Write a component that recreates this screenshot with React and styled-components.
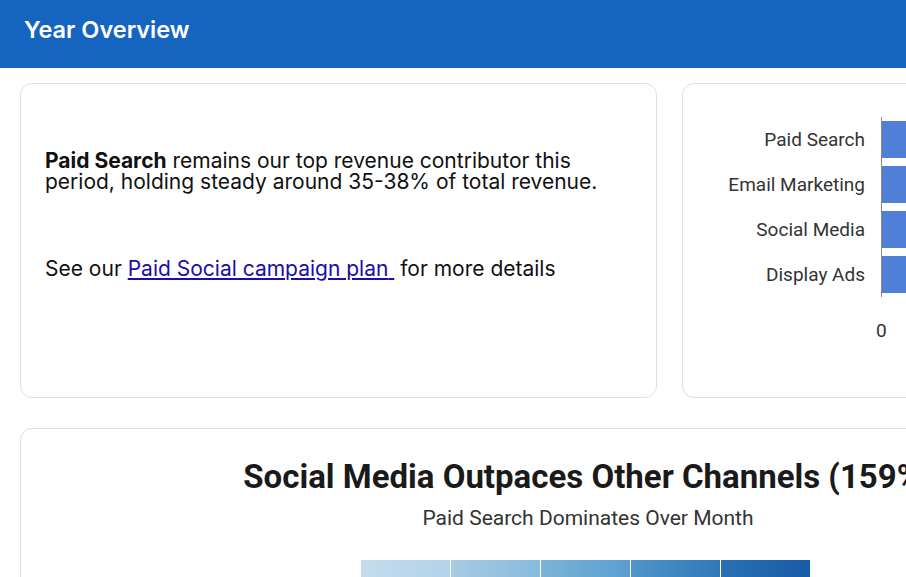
import React from 'react';
import styled, { createGlobalStyle } from 'styled-components';

const GlobalStyle = createGlobalStyle`
  html, body {
    margin: 0;
    padding: 0;
    background: #ffffff;
    overflow: hidden;
  }
  * {
    box-sizing: border-box;
  }
`;

const Page = styled.div`
  width: 1176px;
  font-family: Inter, 'Liberation Sans', sans-serif;
`;

const Header = styled.header`
  height: 68px;
  background-color: #1565c0;
  padding: 15px 24px 0;
`;

const HeaderTitle = styled.h1`
  margin: 0;
  font-size: 23.5px;
  line-height: 30px;
  font-weight: 600;
  color: #ffffff;
`;

const Main = styled.main`
  padding: 15px 20px 0;
  display: flex;
  flex-direction: column;
  gap: 30px;
`;

const TopRow = styled.div`
  display: grid;
  grid-template-columns: 637px 474px;
  gap: 25px;
  height: 315px;
`;

const Card = styled.section`
  background: #ffffff;
  border: 1px solid #e0e0e0;
  border-radius: 12px;
`;

const TextCard = styled(Card)`
  padding: 66px 24px 24px;
  color: #111111;
  font-size: 21px;
  line-height: 21px;
`;

const Paragraph = styled.p`
  margin: 0;
  margin-top: ${({ $gap }) => $gap || 0}px;
`;

const Link = styled.a`
  color: #1a0dab;
  text-decoration: underline;
`;

const ChartCard = styled(Card)`
  padding: 33px 24px 24px;
  font-family: Roboto, 'Liberation Sans', sans-serif;
  color: #333333;
`;

const BarGrid = styled.div`
  display: grid;
  grid-template-columns: 174px 1fr;
  grid-auto-rows: 45px;
`;

const BarLabel = styled.div`
  display: flex;
  align-items: center;
  justify-content: flex-end;
  padding-right: 16px;
  font-size: 19px;
`;

const BarTrack = styled.div`
  border-left: 1.5px solid #8a8a8a;
  display: flex;
  align-items: center;
`;

const Bar = styled.div`
  height: 37px;
  background-color: #4f7fd6;
`;

const TickRow = styled.div`
  display: grid;
  grid-template-columns: 174px 1fr;
  margin-top: 22px;
  font-size: 19px;
`;

const Tick = styled.span`
  grid-column: 2;
  transform: translateX(-5px);
`;

const WideCard = styled(Card)`
  height: 200px;
  padding-top: 28px;
  display: flex;
  flex-direction: column;
  align-items: center;
  font-family: Roboto, 'Liberation Sans', sans-serif;
`;

const ChartTitle = styled.h2`
  margin: 0;
  font-size: 33px;
  line-height: 40px;
  font-weight: 700;
  color: #1a1a1a;
  white-space: nowrap;
`;

const ChartSubtitle = styled.div`
  margin-top: 9px;
  font-size: 21px;
  line-height: 24px;
  color: #333333;
`;

const Heatmap = styled.div`
  margin-top: 30px;
  display: grid;
  grid-template-columns: repeat(5, 89px);
  gap: 1px;
  height: 60px;
  transform: translateX(-3px);
`;

const HeatCell = styled.div`
  background: linear-gradient(to right, ${({ $from }) => $from}, ${({ $to }) => $to});
`;

const channels = [
  { name: 'Paid Search', value: 92 },
  { name: 'Email Marketing', value: 70 },
  { name: 'Social Media', value: 58 },
  { name: 'Display Ads', value: 41 },
];

const heat = [
  ['#c4dcee', '#b3d2e8'],
  ['#a8cbe4', '#86bbdc'],
  ['#7ab3d8', '#5a9ecf'],
  ['#4f95ca', '#2f79b8'],
  ['#2a70b3', '#175ca6'],
];

const App = () => (
  <Page>
    <GlobalStyle />
    <Header>
      <HeaderTitle>Year Overview</HeaderTitle>
    </Header>
    <Main>
      <TopRow>
        <TextCard>
          <Paragraph>
            <strong>Paid Search</strong> remains our top revenue contributor this
            period, holding steady around 35-38% of total revenue.
          </Paragraph>
          <Paragraph $gap={66}>
            See our <Link href="#">Paid Social campaign plan{'\u00a0'}</Link> for more details
          </Paragraph>
        </TextCard>
        <ChartCard>
          <BarGrid>
            {channels.map((c) => (
              <React.Fragment key={c.name}>
                <BarLabel>{c.name}</BarLabel>
                <BarTrack>
                  <Bar style={{ width: `${c.value}%` }} />
                </BarTrack>
              </React.Fragment>
            ))}
          </BarGrid>
          <TickRow>
            <Tick>0</Tick>
          </TickRow>
        </ChartCard>
      </TopRow>
      <WideCard>
        <ChartTitle>Social Media Outpaces Other Channels (159%)</ChartTitle>
        <ChartSubtitle>Paid Search Dominates Over Month</ChartSubtitle>
        <Heatmap>
          {heat.map(([from, to]) => (
            <HeatCell key={from} $from={from} $to={to} />
          ))}
        </Heatmap>
      </WideCard>
    </Main>
  </Page>
);

export default App;
